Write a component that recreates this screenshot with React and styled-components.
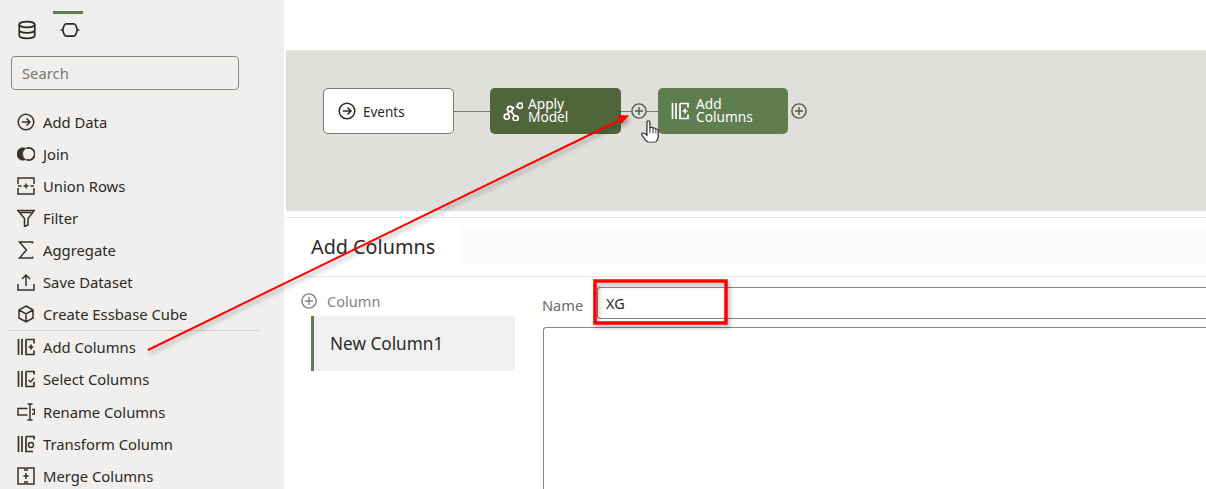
import React from "react";
import styled, { createGlobalStyle } from "styled-components";

const Global = createGlobalStyle`
  html, body { margin: 0; padding: 0; background: #fff; }
  body { font-family: "Noto Sans", "Open Sans", "Liberation Sans", sans-serif; color: #2b2926; }
  * { box-sizing: border-box; }
`;

const Line = ({ children, size = 18, sw = 1.5 }) => (
  <svg width={size} height={size} viewBox="0 0 18 18" fill="none" stroke="currentColor" strokeWidth={sw}>
    {children}
  </svg>
);

const icons = {
  database: (
    <Line size={20}>
      <ellipse cx="9" cy="4" rx="7" ry="2.6" />
      <path d="M2 4v10c0 1.5 3.2 2.6 7 2.6s7-1.1 7-2.6V4M2 9c0 1.5 3.2 2.6 7 2.6s7-1.1 7-2.6" />
    </Line>
  ),
  flow: (
    <Line size={20}>
      <path d="M5.500 3.500h7c1.500 0 2.500 3 3 5.500-.5 2.500-1.500 5.500-3 5.500h-7c-1.500 0-2.500-3-3-5.500.5-2.500 1.500-5.500 3-5.500zM.5 9h2M15.500 9h2" />
    </Line>
  ),
  addData: (
    <Line>
      <circle cx="9" cy="9" r="7.800" />
      <path d="M4.800 9h8M9.500 5.500 13 9l-3.500 3.500" />
    </Line>
  ),
  join: (
    <Line>
      <path d="M9 3.400A6.300 6.300 0 1 0 9 14.600 6.300 6.300 0 0 1 9 3.400z" fill="currentColor" stroke="currentColor" strokeWidth="0.500" />
      <path d="M9.400 3.500A6 6 0 1 1 9.400 14.500" strokeWidth="1.700" />
    </Line>
  ),
  union: (
    <Line>
      <path d="M1 7V1h16v6M1 11v6h16v-6M1 9h3.500M13.500 9H17M9 6.500v5M6.500 9h5" />
    </Line>
  ),
  filter: (
    <Line>
      <path d="M.8 1.500h16.400L11 9.500v6.500l-3.500 1.500V9.500zM3.500 3.500h11" />
    </Line>
  ),
  sigma: (
    <Line>
      <path d="M15.500 2.500V1H2.500L9.500 9l-7 8h13v-1.500" />
    </Line>
  ),
  save: (
    <Line>
      <path d="M1 11v6h16v-6M9 13V2M5 6l4-4 4 4" />
    </Line>
  ),
  cube: (
    <Line>
      <path d="M9 1l7 4v8l-7 4-7-4V5zM2 5l7 4 7-4M9 9v8" />
    </Line>
  ),
  addColumns: (
    <Line sw={1.7}>
      <path d="M1.500 1v16M5 1v16M9 1.500h8v4M9 1.500v15h8v-4M11.500 9h5M14 6.500v5" />
    </Line>
  ),
  selectColumns: (
    <Line sw={1.7}>
      <path d="M1.500 1v16M5 1v16M9 1.500h8v3M9 1.500v15h8V12" />
      <path d="M11.500 10l2 2 3.500-4" strokeWidth="1.300" />
    </Line>
  ),
  rename: (
    <Line>
      <path d="M10.500 5.500H1v6.500h9.500M10.500 1h5M10.500 17h5M13 1v16M15 6.500h2.500v4.500H15" />
    </Line>
  ),
  transform: (
    <Line sw={1.7}>
      <path d="M1.500 1v16M5 1v16M9 1.500h8v3M9 1.500v15h7" />
      <circle cx="14" cy="10" r="2.500" strokeWidth="1.400" />
    </Line>
  ),
  merge: (
    <Line>
      <path d="M8 4V1H1v16h7v-3M10 4V1h7v16h-7v-3M9 6v6M6.500 9h5" />
    </Line>
  ),
  model: (
    <Line size={20} sw={1.5}>
      <circle cx="3.400" cy="14.100" r="2.300" />
      <circle cx="6.300" cy="7.200" r="2.300" />
      <circle cx="11.400" cy="15.600" r="2.300" />
      <circle cx="15.400" cy="4.200" r="2.300" />
      <path d="M4.300 12 5.400 9.300M7.300 9.300 10.400 13.500M8.500 6.500 10 5.800M11.500 5.300 13.200 4.700" />
    </Line>
  ),
  plus: (
    <Line size={16} sw={1.6}>
      <circle cx="9" cy="9" r="8" />
      <path d="M9 4.500v9M4.500 9h9" />
    </Line>
  ),
};

const paletteTop = [
  ["addData", "Add Data"],
  ["join", "Join"],
  ["union", "Union Rows"],
  ["filter", "Filter"],
  ["sigma", "Aggregate"],
  ["save", "Save Dataset"],
  ["cube", "Create Essbase Cube"],
];

const paletteBottom = [
  ["addColumns", "Add Columns"],
  ["selectColumns", "Select Columns"],
  ["rename", "Rename Columns"],
  ["transform", "Transform Column"],
  ["merge", "Merge Columns"],
];

export default function App() {
  return (
    <Page>
      <Global />
      <Sidebar>
        <Tabs>
          <Tab>{icons.database}</Tab>
          <Tab $active>{icons.flow}</Tab>
        </Tabs>
        <Search>Search</Search>
        <Group>
          {paletteTop.map(([icon, label]) => (
            <PaletteRow key={label}>
              <RowIcon>{icons[icon]}</RowIcon>
              {label}
            </PaletteRow>
          ))}
        </Group>
        <Group $divided>
          {paletteBottom.map(([icon, label]) => (
            <PaletteRow key={label} $tall>
              <RowIcon>{icons[icon]}</RowIcon>
              {label}
            </PaletteRow>
          ))}
        </Group>
      </Sidebar>

      <Main>
        <TopBar />
        <Canvas>
          <Node $gap={7} $pad={14}>
            {icons.addData}
            <EventLabel>Events</EventLabel>
          </Node>
          <Link $w={36} />
          <Node $fill="#4f663b" $gap={5}>
            {icons.model}
            <NodeLabel>Apply<br />Model</NodeLabel>
          </Node>
          <Link $w={10} />
          <PlusDot>{icons.plus}</PlusDot>
          <Link $w={11} />
          <Node $fill="#5f7d4f" $gap={7} $narrow>
            {icons.addColumns}
            <NodeLabel>Add<br />Columns</NodeLabel>
          </Node>
          <PlusDot $after>{icons.plus}</PlusDot>
        </Canvas>

        <Header>
          <Title>Add Columns</Title>
          <HeaderFill />
        </Header>

        <Editor>
          <ColumnList>
            <AddColumn>
              {icons.plus}
              Column
            </AddColumn>
            <ColumnItem>New Column1</ColumnItem>
          </ColumnList>
          <Form>
            <NameRow>
              <NameLabel>Name</NameLabel>
              <NameInput>XG</NameInput>
            </NameRow>
            <Expression />
          </Form>
        </Editor>
      </Main>

      <Annotations width="1206" height="489" viewBox="0 0 1206 489">
        <defs>
          <filter id="sh" x="-10%" y="-10%" width="120%" height="130%">
            <feDropShadow dx="2" dy="3" stdDeviation="2" floodColor="#000" floodOpacity="0.3" />
          </filter>
        </defs>
        <g filter="url(#sh)">
          <path d="M148 350 620 120" stroke="#f00" strokeWidth="2" fill="none" />
          <path d="M629 115.500 617 115 621.500 124z" fill="#f00" />
          <rect x="595" y="281" width="131" height="42" fill="none" stroke="#f00" strokeWidth="3.500" />
        </g>
      </Annotations>

      <Cursor width="19" height="25" viewBox="0 0 16 26" preserveAspectRatio="none">
        <path
          d="M5 2c0-1.500 2.500-1.500 2.500 0v7l.3-1c1-.8 2.200-.5 2.400.6 1-.6 2.100-.2 2.300.9 1-.3 2 .2 2 1.500v6c0 3-1.500 6-3 6H6.500c-1.500 0-2-1-3-2.500L.8 15.500c-.8-1.500 1-2.800 2.200-1.500L5 16z"
          fill="#fff"
          stroke="#222"
          strokeWidth="1"
        />
        <path d="M7.500 9v5M10.200 9v5M12.500 10v4" stroke="#222" strokeWidth="0.800" />
      </Cursor>
    </Page>
  );
}

const Page = styled.div`
  position: relative;
  display: flex;
  width: 1206px;
  height: 489px;
  overflow: hidden;
  background: #fff;
`;

const Sidebar = styled.aside`
  flex: 0 0 284px;
  background: #f1efed;
  padding: 11px 25px 0 8px;
`;

const Tabs = styled.div`
  display: flex;
  gap: 10px;
  padding-left: 3px;
`;

const Tab = styled.div`
  width: ${(p) => (p.$active ? "30px" : "32px")};
  height: 32px;
  padding-top: 6px;
  padding-left: ${(p) => (p.$active ? "3px" : "0")};
  display: flex;
  justify-content: center;
  color: #2b2926;
  border-top: 3px solid ${(p) => (p.$active ? "#5f7d4f" : "transparent")};
`;

const Search = styled.div`
  width: 228px;
  height: 34px;
  margin: 13px 0 16px 3px;
  padding: 0 10px;
  display: flex;
  align-items: center;
  border: 1px solid #8a8680;
  border-radius: 4px;
  font-size: 14.800px;
  color: #7a7671;
`;

const Group = styled.div`
  ${(p) => p.$divided && "border-top: 1px solid #d5d3d0;"}
`;

const PaletteRow = styled.div`
  display: flex;
  align-items: center;
  height: ${(p) => (p.$tall ? "32.25px" : "32px")};
  padding-left: 9px;
  font-size: 14.800px;
  color: #2b2926;
`;

const RowIcon = styled.span`
  display: flex;
  width: 26px;
  flex: none;
  color: #35322e;
`;

const Main = styled.main`
  flex: 1;
  min-width: 0;
  display: flex;
  flex-direction: column;
`;

const TopBar = styled.div`
  height: 51px;
  flex: none;
  border-bottom: 1px solid #e4e3e0;
  margin-left: 2px;
`;

const Canvas = styled.section`
  height: 160px;
  flex: none;
  margin-left: 2px;
  padding: 37px 0 0 37px;
  display: flex;
  align-items: flex-start;
  background: #e0dfdb;
`;

const Node = styled.div`
  width: ${(p) => (p.$narrow ? "130px" : "131px")};
  height: 46px;
  padding-left: ${(p) => p.$pad || 13}px;
  display: flex;
  align-items: center;
  gap: ${(p) => p.$gap}px;
  font-size: 13.500px;
  border-radius: 5px;
  color: ${(p) => (p.$fill ? "#fff" : "#2b2926")};
  background: ${(p) => p.$fill || "#fff"};
  border: ${(p) => (p.$fill ? "none" : "1px solid #7d7972")};
`;

const EventLabel = styled.span`
  margin-top: 2px;
`;

const NodeLabel = styled.span`
  margin-top: -2px;
  font-size: 13.700px;
  line-height: 13px;
`;

const Link = styled.div`
  width: ${(p) => p.$w}px;
  height: 1px;
  margin-top: 23px;
  background: #7d7972;
`;

const PlusDot = styled.div`
  display: flex;
  margin: 15px 0 0 ${(p) => (p.$after ? "3px" : "0")};
  color: #4f5f45;
`;

const Header = styled.header`
  height: 60px;
  flex: none;
  margin: 6px 0 0 2px;
  padding: 10px 0 13px 25px;
  display: flex;
  align-items: stretch;
  border-top: 1px solid #e7e6e3;
  border-bottom: 1px solid #e7e6e3;
`;

const Title = styled.h1`
  margin: 2px 0 0;
  width: 149px;
  flex: none;
  display: flex;
  align-items: center;
  font-size: 19.800px;
  font-weight: 400;
  color: #2b2926;
`;

const HeaderFill = styled.div`
  flex: 1;
  background: #fbfbfb;
`;

const Editor = styled.section`
  flex: 1;
  display: flex;
  min-height: 0;
`;

const ColumnList = styled.div`
  width: 258px;
  flex: none;
  padding: 13px 0 0 17px;
`;

const AddColumn = styled.div`
  display: flex;
  align-items: center;
  gap: 10px;
  height: 22px;
  margin-bottom: 4px;
  font-size: 14.600px;
  color: #85817b;
`;

const ColumnItem = styled.div`
  margin-left: 10px;
  width: 204px;
  height: 55px;
  padding-left: 16px;
  display: flex;
  align-items: center;
  font-size: 17.200px;
  background: #f0f0f0;
  border-left: 3px solid #5f7d4f;
`;

const Form = styled.div`
  flex: 1;
  min-width: 0;
  padding-top: 10px;
`;

const NameRow = styled.div`
  display: flex;
  align-items: center;
`;

const NameLabel = styled.label`
  width: 55px;
  flex: none;
  font-size: 14.600px;
  color: #6f6b66;
  margin-top: 3px;
`;

const NameInput = styled.div`
  flex: 1;
  height: 32px;
  padding: 0 8px;
  display: flex;
  align-items: center;
  font-size: 14.500px;
  border: 1px solid #8a8680;
  border-right: none;
  border-radius: 3px 0 0 3px;
`;

const Expression = styled.div`
  height: 180px;
  margin: 8px 0 0 1px;
  border: 1px solid #8a8680;
  border-right: none;
  border-radius: 3px 0 0 0;
`;

const Annotations = styled.svg`
  position: absolute;
  inset: 0;
  pointer-events: none;
`;

const Cursor = styled.svg`
  position: absolute;
  left: 641px;
  top: 120px;
`;
